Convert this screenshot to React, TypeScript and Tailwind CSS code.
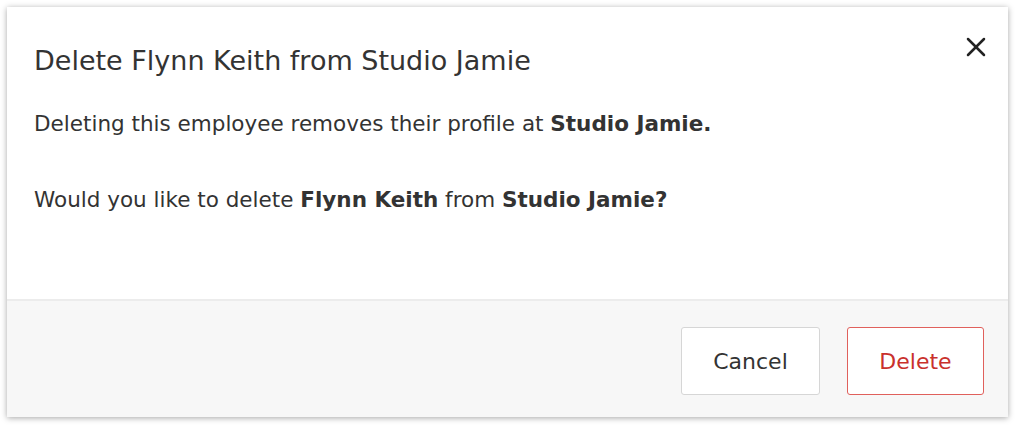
import { X } from 'lucide-react';

export default function App() {
    return (
        <div className="w-[1016px] h-[425px] bg-white pl-[7px] pt-[7px] font-['DejaVu_Sans',_'Liberation_Sans',_sans-serif] text-[#333]">
            <div className="w-[1001px] h-[410px] bg-white shadow-[0_1px_6px_rgba(0,0,0,0.35)] flex flex-col">
                <div className="relative h-[292px] pl-[27px] pr-6">
                    <h2 className="pt-[36px] text-[27px] leading-[36px]">Delete Flynn Keith from Studio Jamie</h2>
                    <button className="absolute right-[16px] top-[24px] text-[#222]">
                        <X className="w-[32px] h-[32px]" strokeWidth={1.9} />
                    </button>
                    <p className="mt-[30px] text-[21.5px] leading-[30px]">
                        Deleting this employee removes their profile at <b>Studio Jamie.</b>
                    </p>
                    <p className="mt-[46px] text-[21.5px] leading-[30px]">
                        Would you like to delete <b>Flynn Keith</b> from <b>Studio Jamie?</b>
                    </p>
                </div>
                <div className="flex-1 border-t-2 border-[#ececec] bg-[#f7f7f7] flex justify-end items-start gap-[27px] pt-[26px] pr-[24px]">
                    <button className="w-[139px] h-[68px] rounded-[3px] border border-[#d6d6d6] bg-white text-[22px] text-[#333]">
                        Cancel
                    </button>
                    <button className="w-[137px] h-[68px] rounded-[3px] border border-[#e0605c] bg-white text-[22px] text-[#c9302c]">
                        Delete
                    </button>
                </div>
            </div>
        </div>
    );
}
